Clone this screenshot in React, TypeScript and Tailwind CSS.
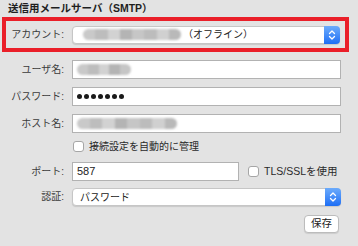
import React from "react"

const labelCls = "w-[64px] shrink-0 text-right text-[10px] leading-none text-[#3b3b3b]"

function Chevrons() {
    return (
        <svg width="8" height="12" viewBox="0 0 8 12" fill="none">
            <path d="M1.5 4.5 L4 2 L6.5 4.5" stroke="white" strokeWidth="1.3" strokeLinecap="round" strokeLinejoin="round" />
            <path d="M1.5 7.5 L4 10 L6.5 7.5" stroke="white" strokeWidth="1.3" strokeLinecap="round" strokeLinejoin="round" />
        </svg>
    )
}

function PopUp({ children, className = "" }: { children: React.ReactNode; className?: string }) {
    return (
        <div className={`flex h-[18px] items-stretch rounded-[4px] border border-[#c6c6c6] bg-white shadow-[0_1px_1px_rgba(0,0,0,0.12)] ${className}`}>
            <div className="flex flex-1 items-center overflow-hidden">{children}</div>
            <div className="-my-px -mr-px flex w-[16px] items-center justify-center rounded-r-[4px] bg-gradient-to-b from-[#6cabfb] to-[#1c6ef5]">
                <Chevrons />
            </div>
        </div>
    )
}

function Blur({ width }: { width: number }) {
    // masked value, rendered as soft grey blocks
    const blocks = ["#c9c9c9", "#bdbdbd", "#d2d2d2", "#b4b4b4", "#c6c6c6", "#bcbcbc", "#d0d0d0", "#b9b9b9"]
    const n = Math.round(width / 12)
    return (
        <div className="flex h-[11px] overflow-hidden rounded-full blur-[1.2px]" style={{ width }}>
            {Array.from({ length: n }).map((_, i) => (
                <div key={i} className="h-full flex-1" style={{ background: blocks[i % blocks.length] }} />
            ))}
        </div>
    )
}

function TextField({ children, className = "" }: { children?: React.ReactNode; className?: string }) {
    return (
        <div className={`flex h-[19px] items-center border border-[#b2b2b2] bg-white pl-[4px] text-[11px] text-[#222] ${className}`}>
            {children}
        </div>
    )
}

function CheckBox() {
    return <div className="h-[11px] w-[11px] shrink-0 rounded-[3px] border border-[#a6a6a6] bg-white" />
}

export default function App() {
    return (
        <div className="h-[246px] w-[358px] overflow-hidden bg-[#e3e3e3] font-['Liberation_Sans','Noto_Sans_CJK_JP',sans-serif]">
            <div className="flex h-[17px] items-center pl-[8px] text-[10.5px] font-bold text-[#1f1f1f]">
                送信用メールサーバ（SMTP）
            </div>

            <div className="ml-[2px] flex h-[35px] w-[347px] items-center border-4 border-[#ea1f29]">
                <div className="w-[58px] shrink-0 text-right text-[10px] leading-none text-[#3b3b3b]">アカウント:</div>
                <PopUp className="ml-[8px] w-[268px]">
                    <div className="ml-[10px] flex items-center">
                        <Blur width={98} />
                        <span className="ml-[2px] text-[10px] text-[#222]">（オフライン）</span>
                    </div>
                </PopUp>
            </div>

            <div className="mt-[8px] flex items-center">
                <div className={labelCls}>ユーザ名:</div>
                <TextField className="ml-[8px] w-[269px]">
                    <Blur width={54} />
                </TextField>
            </div>

            <div className="mt-[8px] flex items-center">
                <div className={labelCls}>パスワード:</div>
                <TextField className="ml-[8px] w-[269px]">
                    <div className="flex gap-[2px]">
                        {Array.from({ length: 7 }).map((_, i) => (
                            <div key={i} className="h-[5px] w-[5px] rounded-full bg-[#1a1a1a]" />
                        ))}
                    </div>
                </TextField>
            </div>

            <div className="mt-[8px] flex items-center">
                <div className={labelCls}>ホスト名:</div>
                <TextField className="ml-[8px] w-[269px]">
                    <Blur width={100} />
                </TextField>
            </div>

            <div className="mt-[8px] flex h-[11px] items-center pl-[73px]">
                <CheckBox />
                <span className="ml-[5px] text-[10px] leading-none text-[#2a2a2a]">接続設定を自動的に管理</span>
            </div>

            <div className="mt-[10px] flex items-center">
                <div className={labelCls}>ポート:</div>
                <TextField className="ml-[8px] w-[167px]">587</TextField>
                <div className="ml-[9px]">
                    <CheckBox />
                </div>
                <span className="ml-[5px] text-[10.5px] leading-none text-[#2a2a2a]">TLS/SSLを使用</span>
            </div>

            <div className="mt-[7px] flex items-center">
                <div className={labelCls}>認証:</div>
                <PopUp className="ml-[8px] w-[269px]">
                    <span className="ml-[7px] text-[10px] text-[#222]">パスワード</span>
                </PopUp>
            </div>

            <div className="mt-[9px] flex justify-end pr-[19px]">
                <button className="flex h-[18px] w-[35px] items-center justify-center rounded-[4px] border border-[#bcbcbc] bg-white text-[10.5px] text-[#222] shadow-[0_1px_1px_rgba(0,0,0,0.1)]">
                    保存
                </button>
            </div>
        </div>
    )
}
